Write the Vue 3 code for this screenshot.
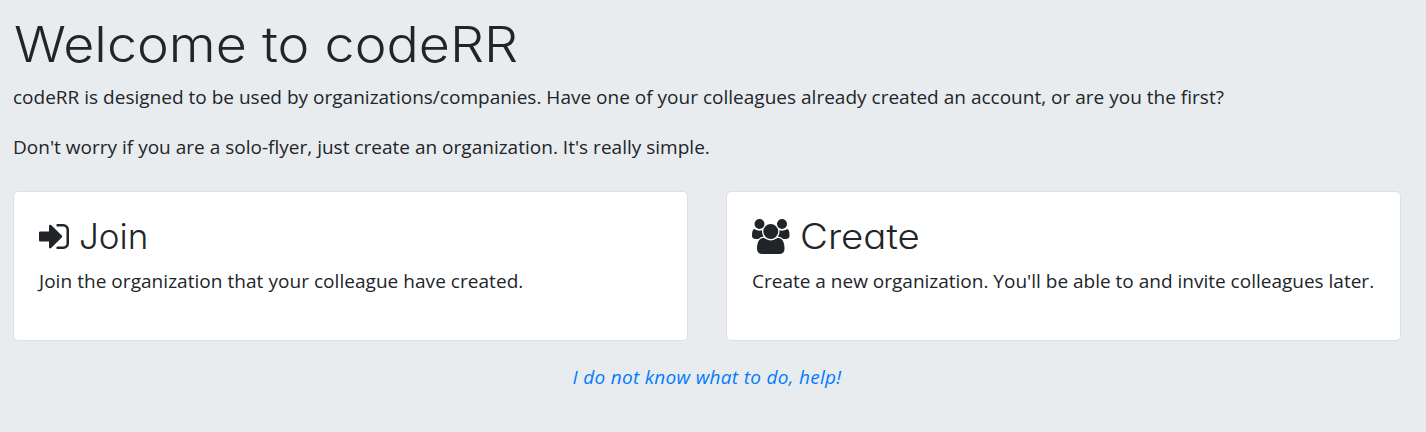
<script setup>
const intro = [
  'codeRR is designed to be used by organizations/companies. Have one of your colleagues already created an account, or are you the first?',
  "Don't worry if you are a solo-flyer, just create an organization. It's really simple."
]
const options = [
  {
    id: 'join',
    title: 'Join',
    text: 'Join the organization that your colleague have created.',
    box: '0 0 1536 1792',
    path: 'M1184 896q0 26-19 45l-544 544q-19 19-45 19t-45-19-19-45v-288h-448q-26 0-45-19t-19-45v-384q0-26 19-45t45-19h448v-288q0-26 19-45t45-19 45 19l544 544q19 19 19 45zm352-352v704q0 119-84.5 203.5t-203.5 84.5h-320q-13 0-22.5-9.5t-9.5-22.5q0-4-1-20t-.5-26.5 3-23.5 10-19.5 20.5-6.5h320q66 0 113-47t47-113v-704q0-66-47-113t-113-47h-312l-11.5-1-11.5-3-8-5.5-7-9-2-13.5q0-4-1-20t-.5-26.5 3-23.5 10-19.5 20.5-6.5h320q119 0 203.5 84.5t84.5 203.5z'
  },
  {
    id: 'create',
    title: 'Create',
    text: "Create a new organization. You'll be able to and invite colleagues later.",
    box: '0 0 1920 1792',
    path: 'M593 896q-162 5-265 128h-134q-82 0-138-40.5t-56-118.5q0-353 124-353 6 0 43.5 21t97.5 42.5 119 21.5q67 0 133-23-5 37-5 66 0 139 81 256zm1071 637q0 120-73 189.5t-194 69.5h-874q-121 0-194-69.5t-73-189.5q0-53 3.5-103.5t14-109 26.5-108.5 43-97.5 62-81 85.5-53.5 111.5-20q10 0 43 21.5t73 48 107 48 135 21.5 135-21.5 107-48 73-48 43-21.5q61 0 111.5 20t85.5 53.5 62 81 43 97.5 26.5 108.5 14 109 3.5 103.5zm-1024-1277q0 106-75 181t-181 75-181-75-75-181 75-181 181-75 181 75 75 181zm704 384q0 159-112.5 271.5t-271.5 112.5-271.5-112.5-112.5-271.5 112.5-271.5 271.5-112.5 271.5 112.5 112.5 271.5zm576 225q0 78-56 118.5t-138 40.5h-134q-103-123-265-128 81-117 81-256 0-29-5-66 66 23 133 23 59 0 119-21.5t97.5-42.5 43.5-21q124 0 124 353zm-128-609q0 106-75 181t-181 75-181-75-75-181 75-181 181-75 181 75 75 181z'
  }
]
</script>

<template>
  <main class="page">
    <h1 class="title">Welcome to codeRR</h1>
    <p v-for="line in intro" :key="line" class="lead">{{ line }}</p>
    <div class="cards">
      <section v-for="o in options" :key="o.id" :class="['card', o.id]">
        <h2 class="card-title">
          <svg class="icon" :viewBox="o.box" aria-hidden="true"><path :d="o.path" /></svg>
          <span class="name">{{ o.title }}</span>
        </h2>
        <p class="text">{{ o.text }}</p>
      </section>
    </div>
    <div class="help"><a href="#">I do not know what to do, help!</a></div>
  </main>
</template>

<style>
body {
  margin: 0;
  background: #e8ecef;
}
</style>

<style scoped>
.page {
  box-sizing: border-box;
  height: 432px;
  padding: 14px 25px 0 13px;
  overflow: hidden;
  background: #e8ecef;
  color: #212529;
  font-family: "Open Sans", "Noto Sans", sans-serif;
  font-size: 19px;
  line-height: 30px;
}
.title {
  width: max-content;
  margin: 0 0 8px 1px;
  font: 300 49px/60px Inter, Lato, sans-serif;
  font-feature-settings: "cv11";
  white-space: nowrap;
  transform: translateY(1px) scaleX(1.097);
  transform-origin: left center;
}
.lead {
  margin: 0 0 20px;
  letter-spacing: 0.01px;
  white-space: nowrap;
}
.cards {
  display: grid;
  grid-template-columns: 1fr 1fr;
  gap: 38px;
  padding-top: 9px;
}
.card {
  box-sizing: border-box;
  height: 150px;
  padding: 22px 25px;
  background: #fff;
  border: 1px solid #dfe0e2;
  border-radius: 5px;
}
.card-title {
  display: flex;
  align-items: center;
  gap: 10px;
  height: 44px;
  margin: 0 0 8px;
  font: 300 35px/44px Inter, Lato, sans-serif;
  font-feature-settings: "cv11";
}
.create .name {
  transform: scaleX(1.097);
  transform-origin: left center;
}
.icon {
  height: 35px;
  fill: currentColor;
}
.text {
  margin: 0;
  white-space: nowrap;
}
.join .text {
  letter-spacing: 0.045px;
}
.help {
  margin-top: 21px;
  text-align: center;
}
.help a {
  color: #007bff;
  font-style: italic;
  letter-spacing: 0.3px;
  text-decoration: none;
}
</style>
